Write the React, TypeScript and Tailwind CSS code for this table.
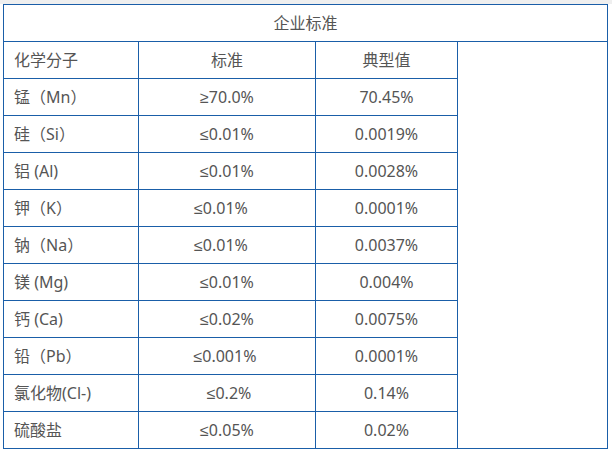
const rows: { name: string; std: string; typical: string; stdClass?: string }[] = [
  { name: "锰（Mn）", std: "≥70.0%", typical: "70.45%" },
  { name: "硅（Si）", std: "≤0.01%", typical: "0.0019%" },
  { name: "铝 (Al)", std: "≤0.01%", typical: "0.0028%" },
  { name: "钾（K）", std: "≤0.01%", typical: "0.0001%", stdClass: "pr-3" },
  { name: "钠（Na）", std: "≤0.01%", typical: "0.0037%", stdClass: "pr-3" },
  { name: "镁 (Mg)", std: "≤0.01%", typical: "0.004%" },
  { name: "钙 (Ca)", std: "≤0.02%", typical: "0.0075%" },
  { name: "铅（Pb）", std: "≤0.001%", typical: "0.0001%", stdClass: "pr-1" },
  { name: "氯化物(Cl-)", std: "≤0.2%", typical: "0.14%", stdClass: "pl-1" },
  { name: "硫酸盐", std: "≤0.05%", typical: "0.02%" },
];

const cell = "border border-[#1a5ea8] p-0 align-middle";

function StdValue({ value }: { value: string }) {
  // the comparison sign renders too wide in the CJK font, so give it a Latin one
  return (
    <>
      <span className="font-['Liberation_Sans',sans-serif]">{value.slice(0, 1)}</span>
      {value.slice(1)}
    </>
  );
}

export default function App() {
  return (
    <div className="min-h-[474px] bg-white text-[16px] text-[#555] font-['Noto_Sans','Noto_Sans_CJK_SC',sans-serif]">
      <div className="h-[4px] bg-[#efefef]" />
      <div className="pl-[3px]">
        <table className="w-[604px] table-fixed border-collapse">
          <colgroup>
            <col className="w-[135px]" />
            <col className="w-[177px]" />
            <col className="w-[142px]" />
            <col className="w-[150px]" />
          </colgroup>
          <tbody>
            <tr className="h-[37px]">
              <td colSpan={4} className={`${cell} text-center`}>
                企业标准
              </td>
            </tr>
            <tr className="h-[37px]">
              <td className={`${cell} pl-[10px]`}>化学分子</td>
              <td className={`${cell} text-center`}>标准</td>
              <td className={`${cell} text-center`}>典型值</td>
              <td rowSpan={11} className={cell}></td>
            </tr>
            {rows.map((row) => (
              <tr key={row.name} className="h-[37px]">
                <td className={`${cell} pl-[10px]`}>{row.name}</td>
                <td className={`${cell} text-center ${row.stdClass ?? ""}`}>
                  <StdValue value={row.std} />
                </td>
                <td className={`${cell} text-center`}>{row.typical}</td>
              </tr>
            ))}
          </tbody>
        </table>
      </div>
    </div>
  );
}
